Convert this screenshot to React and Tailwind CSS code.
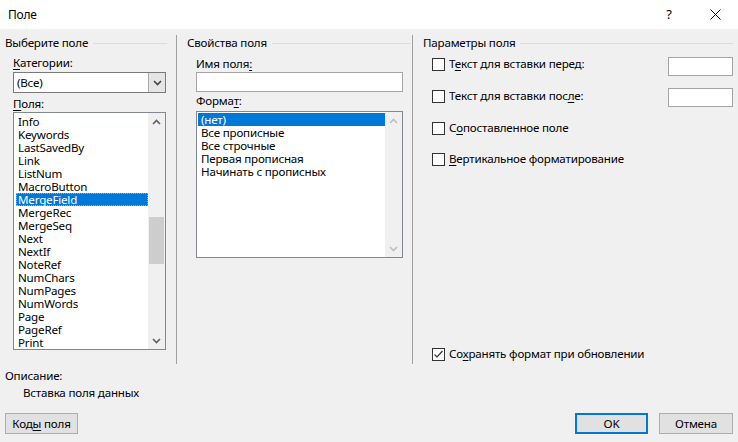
import React from 'react'

const FONT = { fontFamily: '"Noto Sans", "Open Sans", sans-serif' }

const FIELDS = [
  'Info', 'Keywords', 'LastSavedBy', 'Link', 'ListNum', 'MacroButton', 'MergeField',
  'MergeRec', 'MergeSeq', 'Next', 'NextIf', 'NoteRef', 'NumChars', 'NumPages',
  'NumWords', 'Page', 'PageRef', 'Print',
]

const FORMATS = ['(нет)', 'Все прописные', 'Все строчные', 'Первая прописная', 'Начинать с прописных']

function Chevron({ up, color = '#606060' }) {
  return (
    <svg width="9" height="6" viewBox="0 0 9 6">
      <path d={up ? 'M1 5 L4.5 1.5 L8 5' : 'M1 1 L4.5 4.5 L8 1'} fill="none" stroke={color} strokeWidth="1.6" />
    </svg>
  )
}

function GroupHeader({ title, pr }) {
  return (
    <div className={`flex items-center h-4 gap-[5px] ${pr}`}>
      <span className="leading-4 whitespace-nowrap">{title}</span>
      <div className="flex-1 h-px bg-[#dcdcdc]" />
    </div>
  )
}

function Check({ checked }) {
  return (
    <div className="w-[13px] h-[13px] border border-[#333] bg-white flex items-center justify-center shrink-0">
      {checked && (
        <svg width="11" height="11" viewBox="0 0 11 11">
          <path d="M1.5 5.5 L4 8 L9.5 2" fill="none" stroke="#333" strokeWidth="1.2" />
        </svg>
      )}
    </div>
  )
}

function U({ children }) {
  return <span className="underline underline-offset-2">{children}</span>
}

export default function App() {
  return (
    <div style={FONT} className="w-[738px] h-[442px] bg-[#f0f0f0] text-[11.6px] tracking-[-0.2px] text-black flex flex-col overflow-hidden">
      {/* title bar */}
      <div className="h-[29px] bg-white flex items-center shrink-0">
        <span className="pl-[8px] text-[12px] flex-1">Поле</span>
        <span className="w-[46px] text-center text-[13px]">?</span>
        <div className="w-[46px] flex justify-center">
          <svg width="11" height="11" viewBox="0 0 11 11">
            <path d="M0.5 0.5 L10.5 10.5 M10.5 0.5 L0.5 10.5" stroke="#000" strokeWidth="1" />
          </svg>
        </div>
      </div>

      {/* panels */}
      <div className="flex pt-[6px] h-[335px] shrink-0">
        {/* left */}
        <div className="w-[176px] flex flex-col">
          <div className="pl-[5px]">
            <GroupHeader title="Выберите поле" pr="pr-[9px]" />
          </div>
          <div className="ml-[13px] w-[153px]">
            <div className="mt-[5px] h-[14px] leading-[14px]"><U>К</U>атегории:</div>
            <div className="mt-[2px] h-[21px] border border-[#7a7a7a] bg-white flex">
              <span className="flex-1 pl-[3px] leading-[19px]">(Все)</span>
              <div className="w-[17px] bg-[#e5e5e5] border-l border-[#acacac] flex items-center justify-center">
                <Chevron color="#444" />
              </div>
            </div>
            <div className="mt-[4px] h-[14px] leading-[14px]"><U>П</U>оля:</div>
            <div className="mt-[1px] h-[238px] border border-[#828790] bg-white flex">
              <div className="flex-1 pt-[2px] pl-[2px]">
                {FIELDS.map((f) => (
                  <div
                    key={f}
                    className={`h-[13px] leading-[13px] pl-[2px] ${f === 'MergeField' ? 'bg-[#0078d7] text-white outline outline-1 outline-dotted outline-[#e8a040] -outline-offset-1' : ''}`}
                  >
                    {f}
                  </div>
                ))}
              </div>
              <div className="w-[17px] bg-[#f0f0f0] flex flex-col items-center">
                <div className="h-[17px] flex items-center justify-center"><Chevron up /></div>
                <div className="flex-1 w-full">
                  <div className="mt-[87px] mx-px h-[47px] bg-[#cdcdcd]" />
                </div>
                <div className="h-[17px] flex items-center justify-center"><Chevron /></div>
              </div>
            </div>
          </div>
        </div>

        <div className="w-px h-[329px] bg-[#a0a0a0]" />

        {/* middle */}
        <div className="w-[235px] flex flex-col">
          <div className="pl-[10px]">
            <GroupHeader title="Свойства поля" pr="pr-[2px]" />
          </div>
          <div className="ml-[19px] w-[207px]">
            <div className="mt-[6px] h-[14px] leading-[14px]">Имя поля<U>:</U></div>
            <div className="mt-px h-[20px] border border-[#a5a5a5] bg-white" />
            <div className="mt-[2px] h-[14px] leading-[14px]">Форма<U>т</U>:</div>
            <div className="mt-[3px] h-[147px] border border-[#828790] bg-white flex">
              <div className="flex-1 pt-px pl-px">
                {FORMATS.map((f, i) => (
                  <div key={f} className={`h-[13px] leading-[13px] pl-[3px] ${i === 0 ? 'bg-[#0078d7] text-white' : ''}`}>
                    {f}
                  </div>
                ))}
              </div>
              <div className="w-[17px] bg-[#f0f0f0] flex flex-col items-center justify-between">
                <div className="h-[17px] flex items-center justify-center"><Chevron up color="#c0c0c0" /></div>
                <div className="h-[17px] flex items-center justify-center"><Chevron color="#c0c0c0" /></div>
              </div>
            </div>
          </div>
        </div>

        <div className="w-px h-[329px] bg-[#a0a0a0]" />

        {/* right */}
        <div className="flex-1 flex flex-col h-[329px]">
          <div className="pl-[10px]">
            <GroupHeader title="Параметры поля" pr="pr-[5px]" />
          </div>
          <div className="pl-[19px] pr-[5px] flex flex-col flex-1">
            <div className="mt-[3px] h-[20px] flex items-center gap-[4px]">
              <Check />
              <span className="flex-1">Т<U>е</U>кст для вставки перед:</span>
              <div className="w-[65px] h-[19px] mt-[4px] border border-[#a5a5a5] bg-white" />
            </div>
            <div className="mt-[12px] h-[20px] flex items-center gap-[4px]">
              <Check />
              <span className="flex-1">Текст для вставки пос<U>л</U>е:</span>
              <div className="w-[65px] h-[19px] mt-[3px] border border-[#a5a5a5] bg-white" />
            </div>
            <div className="mt-[12px] h-[20px] flex items-center gap-[4px]">
              <Check />
              <span>С<U>о</U>поставленное поле</span>
            </div>
            <div className="mt-[11px] h-[20px] flex items-center gap-[4px]">
              <Check />
              <span><U>В</U>ертикальное форматирование</span>
            </div>
            <div className="mt-auto h-[20px] flex items-center gap-[4px]">
              <Check checked />
              <span>Со<U>х</U>ранять формат при обновлении</span>
            </div>
          </div>
        </div>
      </div>

      {/* description */}
      <div className="pl-[5px] mt-[5px] h-[14px] leading-[14px]">Описание:</div>
      <div className="pl-[23px] mt-[3px] h-[14px] leading-[14px]">Вставка поля данных</div>

      {/* buttons */}
      <div className="mt-[13px] flex items-center px-[5px]">
        <button className="w-[73px] h-[21px] border border-[#adadad] bg-[#e1e1e1] leading-[19px] text-center">
          Код<U>ы</U> поля
        </button>
        <div className="flex-1" />
        <button className="w-[73px] h-[21px] border-2 border-[#0078d7] bg-[#e1e1e1] leading-[17px] text-center">
          OK
        </button>
        <button className="ml-[11px] w-[74px] h-[21px] border border-[#adadad] bg-[#e1e1e1] leading-[19px] text-center">
          Отмена
        </button>
      </div>
    </div>
  )
}
